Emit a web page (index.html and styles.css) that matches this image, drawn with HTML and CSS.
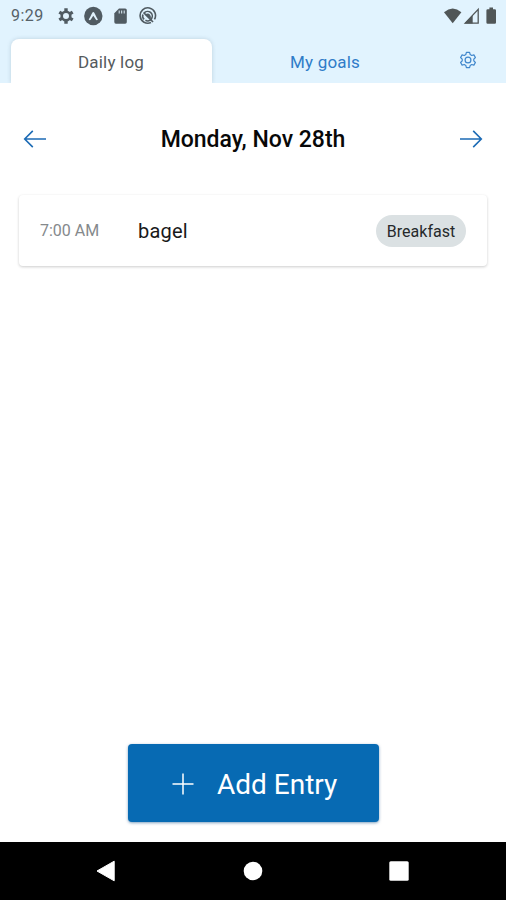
FILE: index.html
```html
<!DOCTYPE html>
<html lang="en">
<head>
<meta charset="utf-8">
<title>Daily log</title>
<link rel="stylesheet" href="styles.css">
</head>
<body>
<div class="screen">
  <header class="top">
    <div class="status">
      <span class="clock">9:29</span>
      <svg class="status-left" width="102" height="20" viewBox="0 0 102 20">
        <g fill="none" stroke="#505b62">
          <circle cx="11" cy="10" r="4.3" stroke-width="2.6"/>
          <path d="M11 2.3v3M11 14.7v3M4.3 6.1l2.6 1.5M15.1 12.4l2.6 1.5M4.3 13.9l2.6-1.5M15.1 7.6l2.6-1.5" stroke-width="3.4"/>
        </g>
        <circle cx="38.3" cy="10" r="9.2" fill="#505b62"/>
        <path d="M33.7 13.6c1.2-1.8 2.6-5.2 3.6-6.9.5-.8 1.5-.8 2 0 1 1.7 2.4 5.1 3.6 6.9-.8 1-1.6.7-2.1-.1l-2.5-3.8-2.5 3.8c-.5.8-1.3 1.1-2.1.1z" fill="#e0f1fb"/>
        <path d="M64 2.5h6.2q1.6 0 1.6 1.6v12q0 1.6-1.6 1.6h-9.3q-1.6 0-1.6-1.6V7.3z" fill="#505b62"/>
        <path d="M64.2 4.5v3M66.7 4.5v3M69.2 4.5v3" stroke="#e0f1fb" stroke-width="1"/>
        <g fill="none" stroke="#505b62" stroke-width="1.6">
          <path d="M96 16.5a7.7 7.7 0 1 1 3.5-3.2"/>
          <path d="M89.2 6.9a4.7 4.7 0 1 1 1.2 7.4M87.9 8.4a4.7 4.7 0 0 0 1.2 4.9"/>
          <path d="M88.5 6.5l9.5 9.5" stroke-width="1.7"/>
        </g>
        <path d="M90 8.7q2.8-2.4 5.1 0 1.6 2.3.4 4.6z" fill="#505b62"/>
      </svg>
      <svg class="status-right" width="56" height="20" viewBox="0 0 56 20">
        <path d="M1 6.2Q9.7-1.1 18.4 6.2L9.7 17.3z" fill="#505657"/>
        <path d="M22.2 17.1L35.2 3.3v13.8z" fill="none" stroke="#505657" stroke-width="1.3"/>
        <path d="M21.5 17.5l8.2-8.5v8.5z" fill="#505657"/>
        <path d="M46.4 3.3v-1.7h3.6v1.7h1.8q1.2 0 1.2 1.2v12q0 1.2-1.2 1.2h-7.2q-1.2 0-1.2-1.2v-12q0-1.2 1.2-1.2z" fill="#505657"/>
      </svg>
    </div>
    <nav class="tabs">
      <div class="tab tab-active">Daily log</div>
      <div class="tab">My goals</div>
      <div class="settings">
        <svg width="18" height="18" viewBox="0 0 18 18" fill="none" stroke="#3f86cc" stroke-width="1.2" stroke-linejoin="round">
          <path d="M7.4 1.4h3.2l.6 2.2 1.5.9 2.2-.6 1.5 2.6-1.6 1.6v1.8l1.6 1.6-1.5 2.6-2.2-.6-1.5.9-.6 2.2H7.4l-.6-2.2-1.5-.9-2.2.6-1.5-2.6 1.6-1.6V8.100l-1.6-1.6 1.500-2.600 2.200.600 1.500-.900z"/>
          <circle cx="9" cy="9" r="2.900"/>
        </svg>
      </div>
    </nav>
  </header>
  <main class="content">
    <div class="date-row">
      <svg width="24" height="20" viewBox="0 0 24 20" fill="none" stroke="#1c6bb5" stroke-width="1.6"><path d="M23 10H1.800M9.800 1.900L1.700 10l8.100 8.100"/></svg>
      <h1 class="date">Monday, Nov 28th</h1>
      <svg width="24" height="20" viewBox="0 0 24 20" fill="none" stroke="#1c6bb5" stroke-width="1.6"><path d="M1 10h21.200M14.200 1.900l8.100 8.100-8.100 8.100"/></svg>
    </div>
    <section class="entry">
      <span class="time">7:00 AM</span>
      <span class="food">bagel</span>
      <span class="meal">Breakfast</span>
    </section>
    <button class="add">
      <svg width="22" height="22" viewBox="0 0 22 22" stroke="#fff" stroke-width="1.500"><path d="M11 .5v21M.5 11h21"/></svg>
      <span>Add Entry</span>
    </button>
  </main>
  <footer class="navbar">
    <svg width="20" height="22" viewBox="0 0 20 22"><path d="M18.200 1.200v19.600L1 11z" fill="#fff" stroke="#fff" stroke-linejoin="round"/></svg>
    <svg width="20" height="20" viewBox="0 0 20 20"><circle cx="10" cy="10" r="9.300" fill="#fff"/></svg>
    <svg width="20" height="20" viewBox="0 0 20 20"><rect x=".3" y=".3" width="19.400" height="19.400" rx="1.500" fill="#fff"/></svg>
  </footer>
</div>
</body>
</html>
```
FILE: styles.css
```css
* { box-sizing: border-box; }
body { margin: 0; background: #fff; font-family: Roboto, "Liberation Sans", sans-serif; }
svg { display: block; flex: none; }
.screen { width: 506px; height: 900px; display: flex; flex-direction: column; overflow: hidden; }
.top { height: 83px; background: #e1f3fe; display: flex; flex-direction: column; overflow: hidden; }
.status { height: 39px; padding: 6px 7px 0 11px; display: flex; align-items: flex-start; }
.clock { width: 44px; font-size: 16px; line-height: 20px; letter-spacing: .5px; color: #566168; }
.status-right { margin-left: auto; }
.tabs { flex: 1; display: flex; padding-left: 11px; }
.tab { width: 201px; height: 44px; padding-right: 1px; line-height: 47px; text-align: center; font-size: 17px; letter-spacing: .2px; color: #2f7cc8; }
.tab-active { background: #fff; color: #555a5d; border-radius: 8px 8px 0 0; box-shadow: 0 0 4px rgba(60, 90, 110, .22); }
.tab + .tab { width: 227px; }
.settings { padding: 12px 0 0 20px; }
.content { flex: 1; display: flex; flex-direction: column; padding: 41px 19px 20px; }
.date-row { height: 30px; padding: 0 4px; display: flex; justify-content: space-between; align-items: center; }
.date { margin: 0; font-size: 23px; font-weight: 500; color: #080808; }
.entry { height: 71px; margin-top: 41px; padding: 0 21px; display: flex; align-items: center; border-radius: 4px; background: #fff; box-shadow: 0 1px 3px rgba(0, 0, 0, .2); }
.time { width: 98px; font-size: 16px; color: #85898c; }
.food { font-size: 20px; letter-spacing: .2px; color: #191919; }
.meal { width: 90px; height: 32px; margin-left: auto; border-radius: 16px; background: #dbe1e3; font-size: 16px; line-height: 34px; text-align: center; color: #25292b; }
.add { width: 251px; height: 78px; margin: auto auto 0 109px; padding: 2px 0 0 44px; display: flex; align-items: center; gap: 23px; border: 0; border-radius: 4px; background: #076ab3; box-shadow: 0 1px 3px rgba(0, 70, 130, .5); color: #fff; font: 400 28px Roboto, "Liberation Sans", sans-serif; }
.navbar { height: 58px; padding: 0 97px 0 96px; display: flex; justify-content: space-between; align-items: center; background: #000; }
```
